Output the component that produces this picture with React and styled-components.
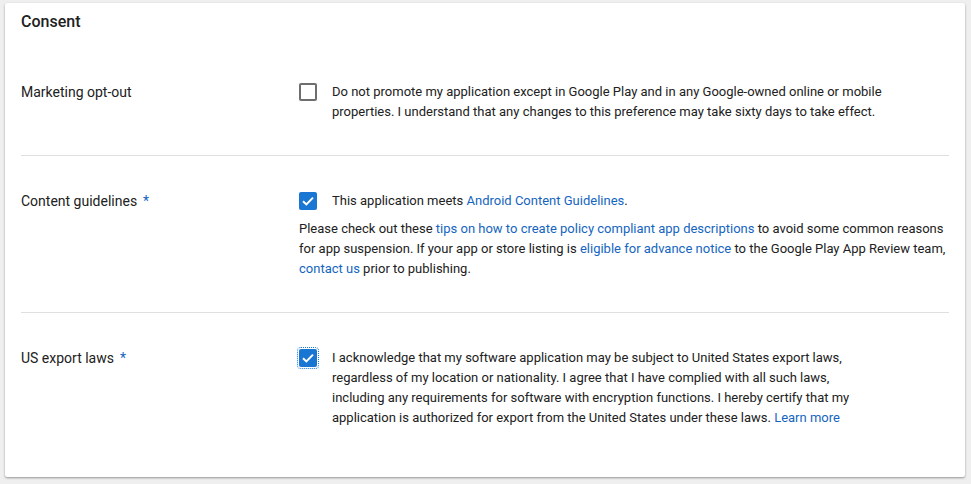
import React from "react";
import styled, { createGlobalStyle } from "styled-components";

const Global = createGlobalStyle`
  html, body { margin: 0; padding: 0; background: #efefef; }
  body { font-family: Roboto, "Noto Sans", Arial, sans-serif; color: #212121; }
  * { box-sizing: border-box; }
`;

const Page = styled.div`
  padding: 3px 6px 8px 5px;
`;

const Card = styled.section`
  background: #fff;
  border-radius: 2px;
  box-shadow: 0 1px 2px rgba(0,0,0,0.28), 0 1px 3px rgba(0,0,0,0.12);
  padding: 7px 16px 16px 16px;
`;

const Title = styled.h2`
  margin: 0 0 13px 0;
  font-size: 16px;
  line-height: 24px;
  font-weight: 500;
  color: #212121;
`;

const Row = styled.div`
  display: grid;
  grid-template-columns: 278px 1fr;
  padding: 35px 0 33px;
  border-top: ${p => (p.$first ? "none" : "1px solid #e0e0e0")};
  line-height: 20px;
`;

const Label = styled.div`
  color: #212121;
  font-size: 14px;
`;

const Req = styled.span`
  color: #1565c0;
  margin-left: 6px;
`;

const Field = styled.div`
  display: flex;
  flex-direction: column;
  gap: 8px;
  font-size: 13px;
`;

const CheckLine = styled.label`
  display: flex;
  align-items: flex-start;
  gap: 15px;
`;

const Box = styled.span`
  flex: none;
  width: 18px;
  height: 18px;
  margin-top: 1px;
  border-radius: 2px;
  display: flex;
  align-items: center;
  justify-content: center;
  border: ${p => (p.$checked ? "none" : "2px solid #6e6e6e")};
  background: ${p => (p.$checked ? "#1976d2" : "#fff")};
  outline: ${p => (p.$focus ? "1px dotted #1976d2" : "none")};
  outline-offset: 1px;
`;

const CheckText = styled.span`
  max-width: 552px;
  color: #212121;
`;

const Para = styled.p`
  margin: 0;
  color: #212121;
`;

const Link = styled.a`
  color: #1565c0;
  text-decoration: none;
`;

const Tick = () => (
  <svg width="14" height="14" viewBox="0 0 14 14">
    <path d="M2 7.2 L5.4 10.4 L12 3.6" fill="none" stroke="#fff" strokeWidth="2" />
  </svg>
);

const Checkbox = ({ checked, focus }) => (
  <Box $checked={checked} $focus={focus}>{checked && <Tick />}</Box>
);

export default function App() {
  return (
    <Page>
      <Global />
      <Card>
        <Title>Consent</Title>
        <Row $first>
          <Label>Marketing opt-out</Label>
          <Field>
            <CheckLine>
              <Checkbox />
              <CheckText>
                Do not promote my application except in Google Play and in any Google-owned online or mobile
                properties. I understand that any changes to this preference may take sixty days to take effect.
              </CheckText>
            </CheckLine>
          </Field>
        </Row>
        <Row>
          <Label>Content guidelines<Req>*</Req></Label>
          <Field>
            <CheckLine>
              <Checkbox checked />
              <CheckText>
                This application meets <Link href="#">Android Content Guidelines</Link>.
              </CheckText>
            </CheckLine>
            <Para>
              Please check out these <Link href="#">tips on how to create policy compliant app descriptions</Link> to
              avoid some common reasons for app suspension. If your app or store listing is{" "}
              <Link href="#">eligible for advance notice</Link> to the Google Play App Review team,{" "}
              <Link href="#">contact us</Link> prior to publishing.
            </Para>
          </Field>
        </Row>
        <Row>
          <Label>US export laws<Req>*</Req></Label>
          <Field>
            <CheckLine>
              <Checkbox checked focus />
              <CheckText>
                I acknowledge that my software application may be subject to United States export laws,
                regardless of my location or nationality. I agree that I have complied with all such laws,
                including any requirements for software with encryption functions. I hereby certify that my
                application is authorized for export from the United States under these laws.{" "}
                <Link href="#">Learn more</Link>
              </CheckText>
            </CheckLine>
          </Field>
        </Row>
      </Card>
    </Page>
  );
}
